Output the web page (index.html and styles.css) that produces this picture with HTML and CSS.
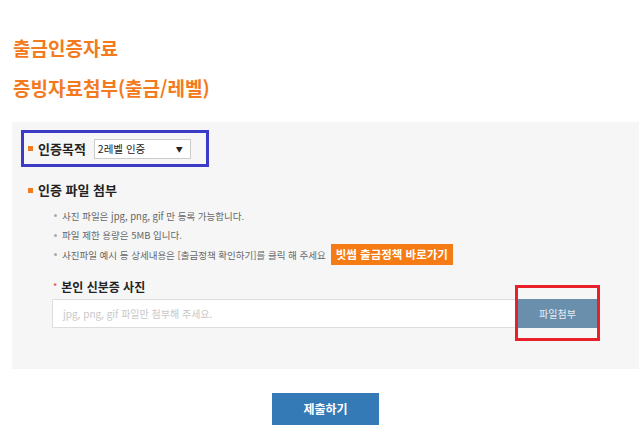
FILE: index.html
```html
<!DOCTYPE html>
<html lang="ko">
<head>
<meta charset="utf-8">
<title>출금인증자료</title>
<link rel="stylesheet" href="styles.css">
</head>
<body>
<div class="page">
  <h1 class="title">출금인증자료</h1>
  <h2 class="title">증빙자료첨부(출금/레벨)</h2>
  <div class="panel">
    <div class="purpose">
      <span class="sq"></span>
      <span class="label">인증목적</span>
      <div class="select"><span>2레벨 인증</span><span class="arrow">▼</span></div>
    </div>
    <div class="section-title"><span class="sq"></span><span class="label">인증 파일 첨부</span></div>
    <ul class="notes">
      <li><span class="dot"></span>사진 파일은 jpg, png, gif 만 등록 가능합니다.</li>
      <li><span class="dot"></span>파일 제한 용량은 5MB 입니다.</li>
      <li><span class="dot"></span>사진파일 예시 등 상세내용은 [출금정책 확인하기]를 클릭 해 주세요 <span class="policy">빗썸 출금정책 바로가기</span></li>
    </ul>
    <div class="upload">
      <div class="upload-label"><span class="star">*</span>본인 신분증 사진</div>
      <div class="upload-row">
        <div class="file-input">jpg, png, gif 파일만 첨부해 주세요.</div>
        <div class="file-btn-wrap">
          <div class="file-btn">파일첨부</div>
          <div class="red-mark"></div>
        </div>
      </div>
    </div>
  </div>
  <div class="submit-row"><div class="submit">제출하기</div></div>
</div>
</body>
</html>
```
FILE: styles.css
```css
* { box-sizing: border-box; }
body {
  margin: 0;
  background: #fff;
  font-family: "Noto Sans CJK KR", "Noto Sans", sans-serif;
  color: #333;
}
.page { padding-top: 28px; }
.title {
  margin: 0 0 0 13px;
  font-size: 19px;
  line-height: 40px;
  font-weight: 700;
  color: #f47a20;
}
.panel {
  margin: 14px 1px 0 12px;
  background: #f6f6f6;
  padding: 8px 0 41px 9px;
}
.purpose {
  display: inline-flex;
  align-items: center;
  width: 188px;
  height: 37px;
  border: 3px solid #3b3bc8;
  padding-left: 4px;
}
.sq {
  display: inline-block;
  width: 5px;
  height: 5px;
  background: #f47a20;
  margin-right: 5px;
}
.label {
  font-size: 13px;
  font-weight: 700;
  color: #222;
  line-height: 20px;
}
.select {
  margin-left: 8px;
  width: 97px;
  height: 20px;
  background: #fff;
  border: 1px solid #ccc;
  display: flex;
  align-items: center;
  justify-content: space-between;
  padding: 0 7px 0 3px;
  font-size: 10.5px;
  color: #222;
}
.arrow { font-size: 7px; }
.section-title {
  display: flex;
  align-items: center;
  margin-top: 13px;
  padding-left: 7px;
  height: 20px;
}
.notes {
  list-style: none;
  margin: 6px 0 0 0;
  padding: 0 0 0 33px;
}
.notes li {
  display: flex;
  align-items: center;
  height: 19.5px;
  font-size: 9.5px;
  color: #666;
  white-space: nowrap;
}
.dot {
  width: 3px;
  height: 3px;
  border-radius: 50%;
  background: #aaa;
  margin-right: 5px;
}
.policy {
  margin-left: 5px;
  background: #f57b14;
  color: #fff;
  font-weight: 700;
  font-size: 11.5px;
  height: 21px;
  line-height: 21px;
  padding: 0 5px;
}
.upload {
  margin: 12px 0 0 31px;
}
.upload-label {
  display: flex;
  align-items: center;
  height: 20px;
  font-size: 12px;
  font-weight: 700;
  color: #222;
}
.star {
  color: #e33;
  font-weight: 400;
  font-size: 9px;
  margin: 0 4px 0 1px;
}
.upload-row {
  display: flex;
  margin-top: 2px;
}
.file-input {
  width: 466px;
  height: 29px;
  background: #fff;
  border: 1px solid #ddd;
  padding-left: 10px;
  font-size: 10px;
  color: #c8c8c8;
  line-height: 27px;
}
.file-btn-wrap { position: relative; }
.file-btn {
  width: 79px;
  height: 29px;
  background: #6a8fad;
  color: #e8eef3;
  font-size: 10px;
  text-align: center;
  line-height: 29px;
}
.red-mark {
  position: absolute;
  top: -14px;
  bottom: -13px;
  left: -3px;
  right: -3px;
  border: 3px solid #e8202a;
}
.submit-row {
  margin: 24px 1px 0 12px;
  display: flex;
  justify-content: center;
}
.submit {
  width: 107px;
  height: 32px;
  background: #337ab7;
  color: #fff;
  font-weight: 700;
  font-size: 12px;
  text-align: center;
  line-height: 32px;
}
```
